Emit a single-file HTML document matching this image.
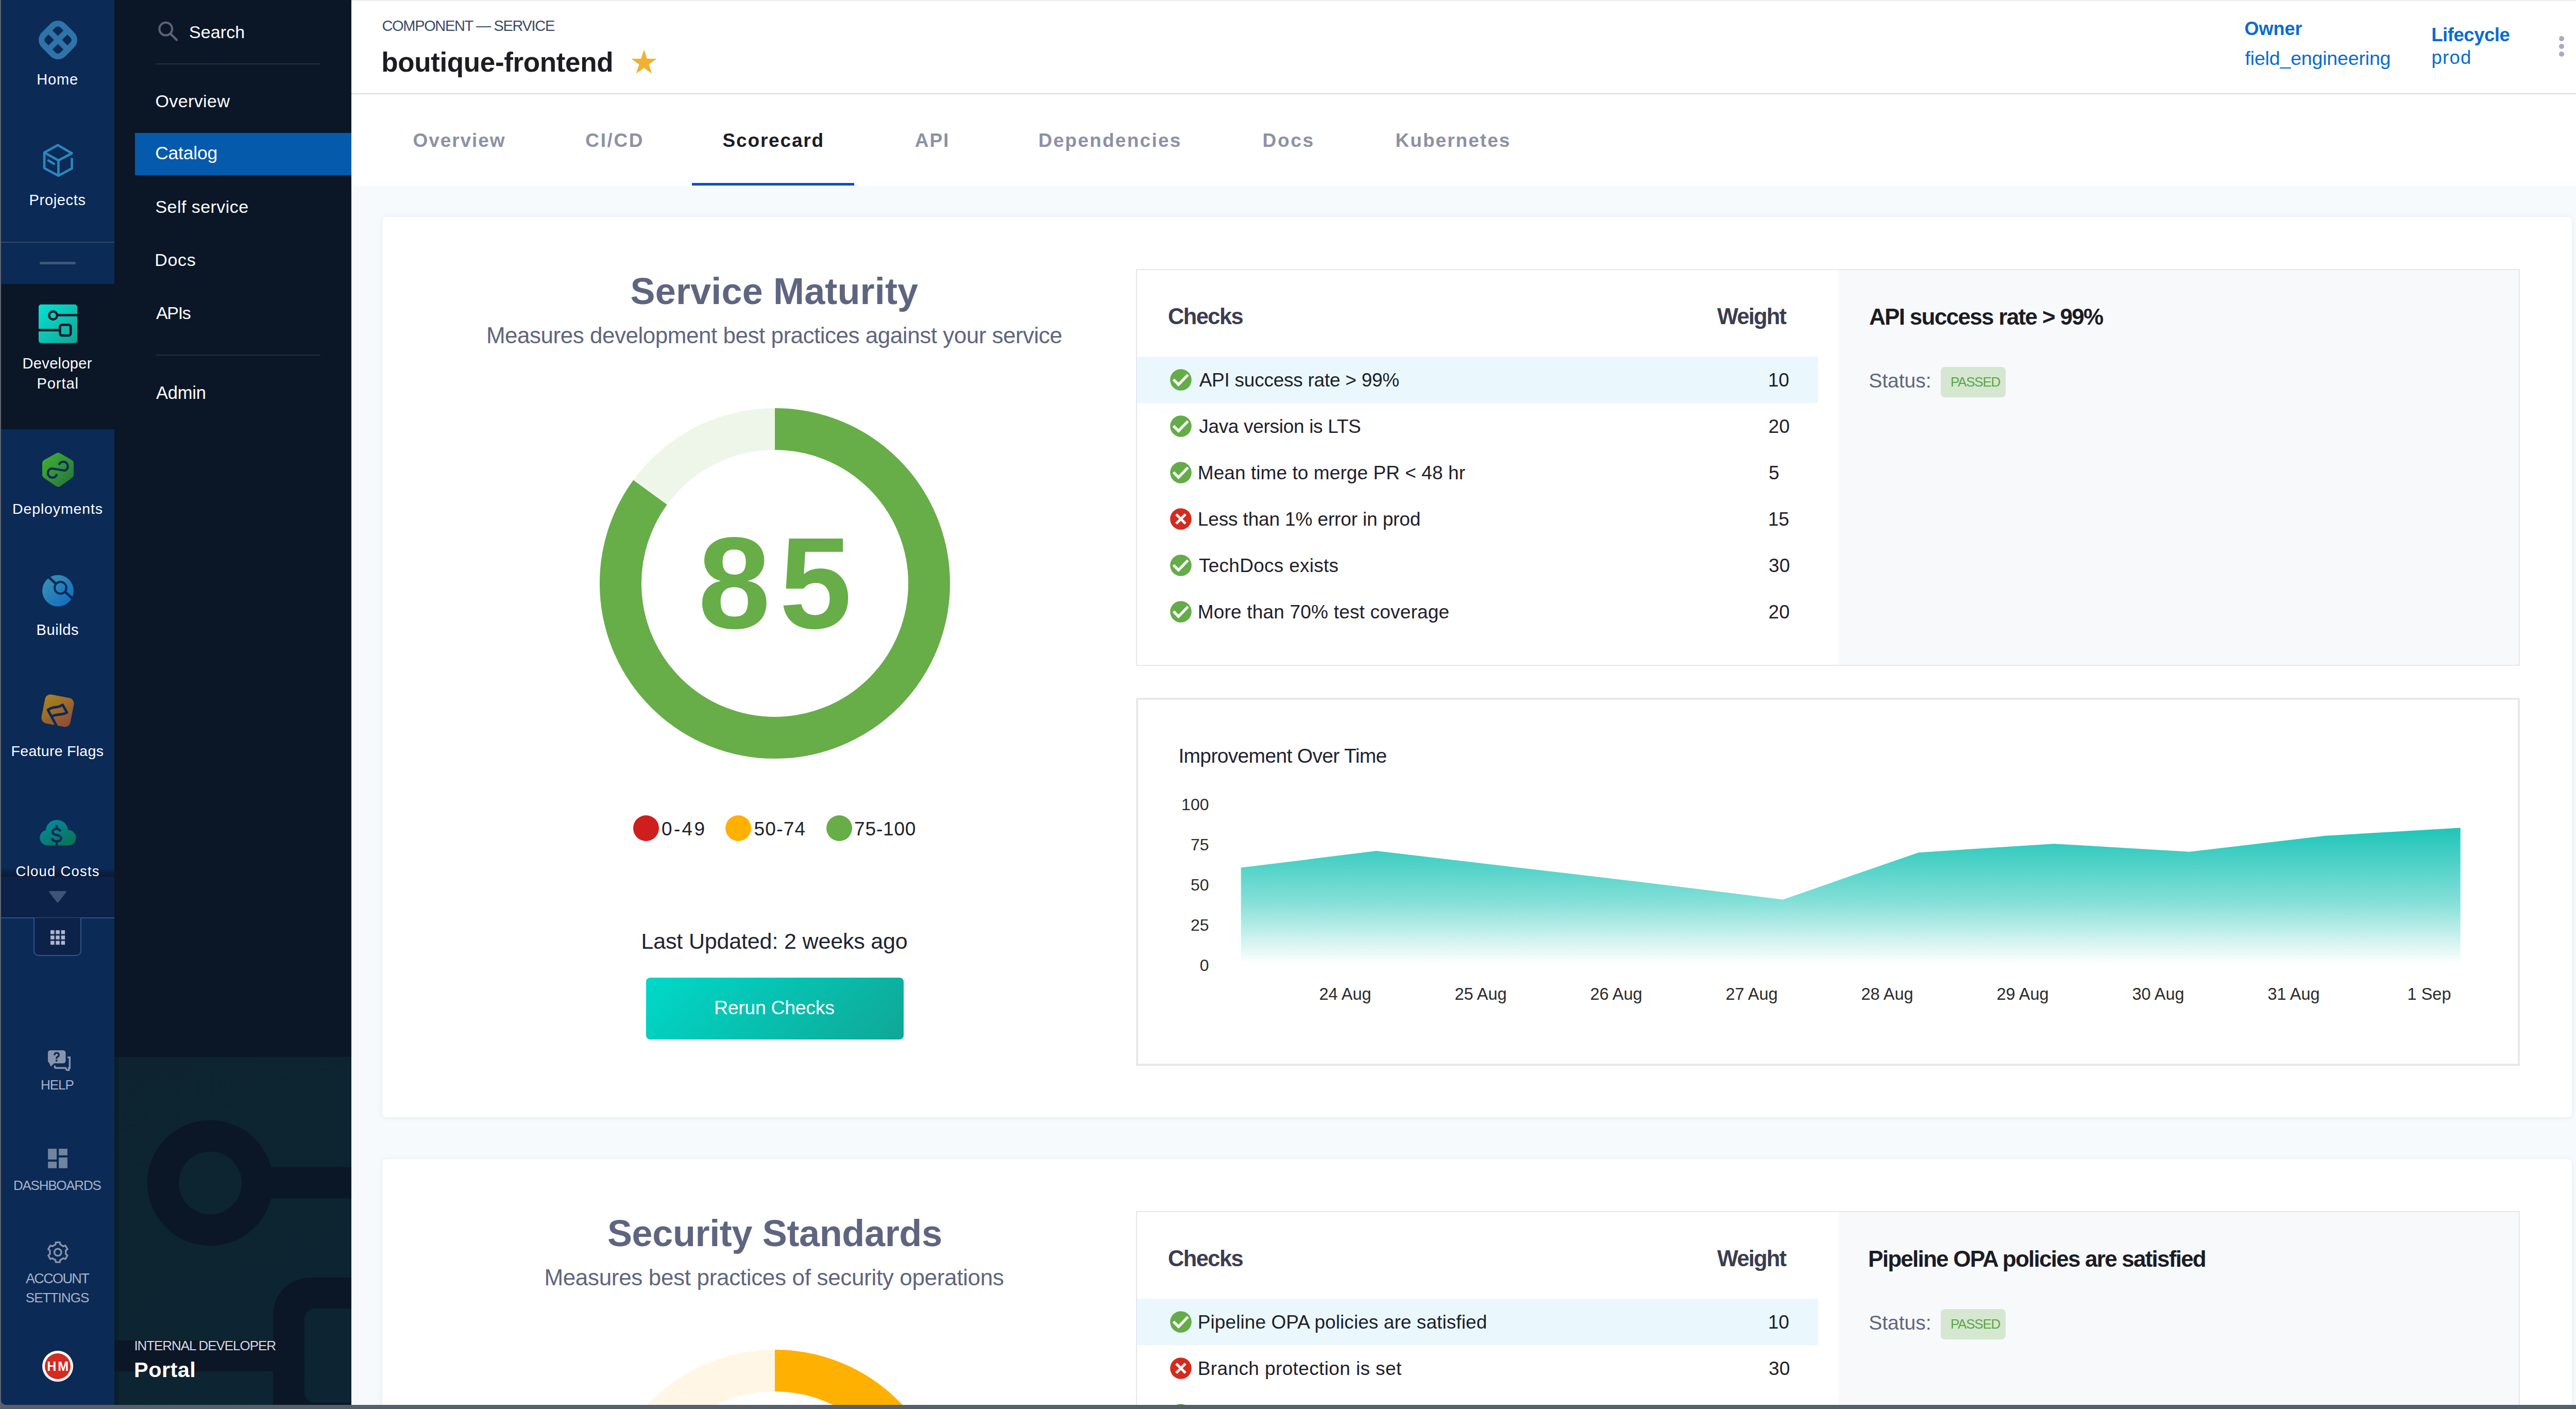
<!DOCTYPE html><html><head><meta charset="utf-8"><style>
html,body{margin:0;padding:0;width:5078px;height:2734px;overflow:hidden;background:#565f6b}
body{position:relative;font-family:"Liberation Sans",sans-serif}
.r,.t,.s{position:absolute}
.t{white-space:nowrap}
</style></head><body>
<div class="r" style="left:0.0px;top:0.0px;width:5078.0px;height:2734.0px;background:#565f6b;"></div>
<div class="r" style="left:682.0px;top:0.0px;width:4370.0px;height:2726.0px;background:#f6fafd;"></div>
<div class="r" style="left:682.0px;top:0.0px;width:4370.0px;height:182.0px;background:#ffffff;"></div>
<div class="r" style="left:682.0px;top:0.0px;width:4370.0px;height:2.0px;background:#eeeeef;"></div>
<div class="r" style="left:682.0px;top:181.0px;width:4370.0px;height:2.0px;background:#d8d9e3;"></div>
<div class="r" style="left:682.0px;top:183.0px;width:4370.0px;height:177.0px;background:#ffffff;"></div>
<div class="r" style="left:1343.0px;top:355.0px;width:315.0px;height:5.0px;background:#0a4fcb;"></div>
<div class="r" style="left:5052.0px;top:0.0px;width:26.0px;height:2726.0px;background:#f8f8f8;border-bottom-right-radius:10px;"></div>
<div class="r" style="left:5052.0px;top:0.0px;width:2.0px;height:2726.0px;background:#e4e4e4;"></div>
<div class="r" style="left:5060.0px;top:6.0px;width:16.0px;height:1255.0px;background:#c1c1c1;border-radius:8px;"></div>
<div class="r" style="left:742.0px;top:421.0px;width:4250.0px;height:1747.0px;background:#ffffff;border-radius:8px;box-shadow:0 1px 8px rgba(60,80,120,0.11);"></div>
<div class="r" style="left:742.0px;top:2249.0px;width:4250.0px;height:477.0px;background:#ffffff;border-radius:8px 8px 0 0;box-shadow:0 1px 8px rgba(60,80,120,0.11);"></div>
<div class="r" style="left:2.0px;top:0.0px;width:680.0px;height:2726.0px;background:#0b1726;border-bottom-left-radius:10px;"></div>
<div class="r" style="left:2.0px;top:0.0px;width:220.0px;height:2726.0px;background:#0b2a56;border-bottom-left-radius:10px;"></div>
<div class="r" style="left:2.0px;top:469.0px;width:220.0px;height:2.0px;background:#34496b;"></div>
<div class="r" style="left:77.0px;top:508.0px;width:70.0px;height:5.0px;background:#3f5878;border-radius:2px;"></div>
<div class="r" style="left:2.0px;top:551.0px;width:220.0px;height:282.0px;background:#0b1726;"></div>
<div class="r" style="left:2.0px;top:1701.0px;width:220.0px;height:80.0px;background:#0c2249;"></div>
<div class="r" style="left:2.0px;top:1780.0px;width:220.0px;height:2.0px;background:#34507a;"></div>
<div class="r" style="left:65.0px;top:1781.0px;width:93.0px;height:74.0px;background:#0c2249;box-sizing:border-box;border:2px solid #2c5592;border-top:none;border-radius:0 0 10px 10px;"></div>
<svg class="s" style="left:98.0px;top:1805.0px" width="28.5" height="28.5" viewBox="0 0 28.5 28.5"><rect x="0.0" y="0.0" width="7.5" height="7.5" fill="#b2b4cc"/><rect x="0.0" y="10.3" width="7.5" height="7.5" fill="#b2b4cc"/><rect x="0.0" y="20.6" width="7.5" height="7.5" fill="#b2b4cc"/><rect x="10.3" y="0.0" width="7.5" height="7.5" fill="#b2b4cc"/><rect x="10.3" y="10.3" width="7.5" height="7.5" fill="#b2b4cc"/><rect x="10.3" y="20.6" width="7.5" height="7.5" fill="#b2b4cc"/><rect x="20.6" y="0.0" width="7.5" height="7.5" fill="#b2b4cc"/><rect x="20.6" y="10.3" width="7.5" height="7.5" fill="#b2b4cc"/><rect x="20.6" y="20.6" width="7.5" height="7.5" fill="#b2b4cc"/></svg>
<svg class="s" style="left:93.0px;top:1727.0px" width="38" height="26" viewBox="0 0 38 26"><path d="M4,2 L34,2 Q37,2 35,5 L21,23 Q19,25.5 17,23 L3,5 Q1,2 4,2 Z" fill="#3d5577"/></svg>
<div class="t" style="left:71.2px;top:139.5px;font-size:29.0px;line-height:29.0px;letter-spacing:0.88px;color:#ffffff;font-weight:400;">Home</div>
<div class="t" style="left:56.6px;top:373.5px;font-size:29.0px;line-height:29.0px;letter-spacing:0.66px;color:#ffffff;font-weight:400;">Projects</div>
<div class="t" style="left:43.6px;top:690.5px;font-size:29.0px;line-height:29.0px;letter-spacing:0.33px;color:#ffffff;font-weight:400;">Developer</div>
<div class="t" style="left:71.6px;top:729.5px;font-size:29.0px;line-height:29.0px;letter-spacing:0.90px;color:#ffffff;font-weight:400;">Portal</div>
<div class="t" style="left:24.1px;top:973.4px;font-size:28.5px;line-height:28.5px;letter-spacing:0.85px;color:#ffffff;font-weight:400;">Deployments</div>
<div class="t" style="left:70.6px;top:1207.5px;font-size:29.0px;line-height:29.0px;letter-spacing:0.57px;color:#ffffff;font-weight:400;">Builds</div>
<div class="t" style="left:21.6px;top:1442.9px;font-size:28.5px;line-height:28.5px;letter-spacing:0.29px;color:#ffffff;font-weight:400;">Feature Flags</div>
<div class="r" style="left:2.0px;top:1684.0px;width:220.0px;height:17.0px;background:linear-gradient(rgba(8,22,50,0),rgba(8,22,50,0.85));"></div>
<div class="t" style="left:30.6px;top:1676.7px;font-size:27.5px;line-height:27.5px;letter-spacing:1.22px;color:#ffffff;font-weight:400;">Cloud Costs</div>
<div class="t" style="left:78.9px;top:2092.0px;font-size:26.0px;line-height:26.0px;letter-spacing:-1.00px;color:#a9b4c9;font-weight:400;">HELP</div>
<div class="t" style="left:25.9px;top:2287.0px;font-size:26.0px;line-height:26.0px;letter-spacing:-1.24px;color:#a9b4c9;font-weight:400;">DASHBOARDS</div>
<div class="t" style="left:49.9px;top:2467.7px;font-size:27.0px;line-height:27.0px;letter-spacing:-1.62px;color:#a9b4c9;font-weight:400;">ACCOUNT</div>
<div class="t" style="left:49.8px;top:2505.0px;font-size:26.0px;line-height:26.0px;letter-spacing:-0.93px;color:#a9b4c9;font-weight:400;">SETTINGS</div>
<svg class="s" style="left:74.8px;top:39.8px" width="75" height="75" viewBox="0 0 75 75"><g transform="rotate(45 37.5 37.5)"><rect x="5" y="5" width="65" height="65" rx="20.5" fill="#2f74a9"/><g fill="#0b2a56"><path d="M17,23.5 A6.5,6.5 0 0 1 23.5,17 L32,17 L32,32 L17,32 Z"/><path d="M43,17 L51.5,17 A6.5,6.5 0 0 1 58,23.5 L58,32 L43,32 Z"/><path d="M17,43 L32,43 L32,58 L23.5,58 A6.5,6.5 0 0 1 17,51.5 Z"/><path d="M43,43 L58,43 L58,51.5 A6.5,6.5 0 0 1 51.5,58 L43,58 Z"/></g></g></svg>
<svg class="s" style="left:75.0px;top:270.0px" width="75" height="80" viewBox="0 0 75 80"><path d="M64.6,38.4 L64.6,56.8 L38.4,71 L11,56.3 L11,26 L37.2,11.5 L64.6,27.4 L38.4,41.3 L11,26 M38.4,41.3 L38.4,71 M18.75,41.3 L29.7,47.9" fill="none" stroke="#2a88bf" stroke-width="4.6" stroke-linejoin="round" stroke-linecap="round"/></svg>
<svg class="s" style="left:70.0px;top:585.0px" width="85" height="85" viewBox="0 0 85 85"><defs><linearGradient id="gdp" x1="0" y1="0" x2="1" y2="1"><stop offset="0" stop-color="#03e4d2"/><stop offset="1" stop-color="#15a395"/></linearGradient></defs><rect x="5" y="5.8" width="75" height="75" rx="5" fill="url(#gdp)"/><circle cx="33.1" cy="27" r="7.8" fill="none" stroke="#0b1726" stroke-width="4.4"/><path d="M40.5,26.5 L80,26.5 M5,55.6 L44,55.6" stroke="#0b1726" stroke-width="4.6"/><rect x="46.4" y="45.2" width="20.8" height="20.8" rx="4" fill="none" stroke="#0b1726" stroke-width="4.6"/></svg>
<svg class="s" style="left:75.0px;top:870.0px" width="75" height="80" viewBox="0 0 75 80"><defs><linearGradient id="gdep" x1="0" y1="0" x2="1" y2="1"><stop offset="0" stop-color="#3eab35"/><stop offset="1" stop-color="#287a39"/></linearGradient></defs><polygon points="37.8,16 60.5,29 60.5,51 37.8,67 14.5,51 14.5,29" fill="url(#gdep)" stroke="url(#gdep)" stroke-width="15" stroke-linejoin="round"/><path d="M39.5,32 A8.8,8.8 0 1 1 50.5,43.2 L25,39 A9,9 0 1 0 35.5,50" fill="none" stroke="#0b2a56" stroke-width="4.2"/></svg>
<svg class="s" style="left:75.0px;top:1105.0px" width="75" height="80" viewBox="0 0 75 80"><defs><linearGradient id="gbld" x1="0" y1="0" x2="1" y2="1"><stop offset="0" stop-color="#3d96ad"/><stop offset="1" stop-color="#0b68c6"/></linearGradient></defs><circle cx="37.5" cy="41.3" r="30.5" fill="url(#gbld)"/><circle cx="42.4" cy="35.5" r="11.4" fill="none" stroke="#0b2a56" stroke-width="4"/><path d="M18.6,14.1 L32.7,26.8 M52.1,44.2 L68,58.5" stroke="#0b2a56" stroke-width="5"/></svg>
<svg class="s" style="left:72.0px;top:1340.0px" width="80" height="80" viewBox="0 0 80 80"><defs><linearGradient id="gff" x1="0" y1="0" x2="1" y2="1"><stop offset="0" stop-color="#aa881c"/><stop offset="1" stop-color="#8c483b"/></linearGradient></defs><rect x="11.5" y="10.5" width="57" height="57" rx="11" fill="url(#gff)" transform="rotate(11 40 39)"/><path d="M38.5,70 L21,37.5 C27,32 35,32.5 41,31.5 C45,30.5 47,29 49.5,27.5 L58,42.5 C54,45 49,46 43.5,46.5 C38,47 34,47.5 30,49.5" fill="none" stroke="#0b2a56" stroke-width="4.8" stroke-linejoin="round"/></svg>
<svg class="s" style="left:72.0px;top:1580.0px" width="80" height="70" viewBox="0 0 80 70"><defs><linearGradient id="gcc" gradientUnits="userSpaceOnUse" x1="30" y1="10" x2="55" y2="62"><stop offset="0" stop-color="#05899c"/><stop offset="1" stop-color="#0a7357"/></linearGradient></defs><g fill="url(#gcc)"><circle cx="38.4" cy="32.6" r="21.7"/><circle cx="20.3" cy="45.6" r="15"/><circle cx="60.5" cy="45.6" r="15"/><rect x="20.3" y="40" width="40.2" height="20.6"/></g><path d="M45.5,33 C44,29.5 41,28.3 37.8,28.3 C33,28.3 30,31 30,34.5 C30,38.5 34,39.5 38,40.3 C42.5,41.2 46.5,42.5 46.5,46.5 C46.5,50.5 42.5,52.5 38,52.5 C33.5,52.5 30,50.5 28.5,46.5 M37.9,21 L37.9,28.3 M38.2,52.5 L38.2,61" fill="none" stroke="#0b2a56" stroke-width="4.5"/></svg>
<svg class="s" style="left:85.0px;top:2030.0px" width="60" height="55" viewBox="0 0 60 55"><path d="M13,8.1 H37 Q42.5,8.1 42.5,13.6 V27.8 Q42.5,33.3 37,33.3 H20.2 L13.5,39.5 L10.7,33 Q7.9,31 7.9,27.8 V13.6 Q7.9,8.1 13,8.1 Z" fill="#8894ae"/><path d="M20.8,17.5 Q20.8,13.2 25,13.2 Q29.3,13.2 29.3,17 Q29.3,19.5 26.6,20.8 Q24.6,21.8 24.6,24.5" fill="none" stroke="#0b2a56" stroke-width="3.3"/><circle cx="24.7" cy="28" r="2" fill="#0b2a56"/><path d="M46.2,21.6 H50.3 V42.2 H48.6 V46.2 H44.8 L42,42.2 H23.5 Q21.3,42.2 21.3,40 V37.5" fill="none" stroke="#8894ae" stroke-width="3.4"/></svg>
<svg class="s" style="left:85.0px;top:2220.0px" width="55" height="55" viewBox="0 0 55 55"><g fill="#72849e"><rect x="8.1" y="9" width="16.9" height="20.9"/><rect x="8.1" y="34.1" width="16.9" height="12.7"/><rect x="29.1" y="9" width="16.8" height="12.8"/><rect x="29.1" y="26" width="16.8" height="20.8"/></g></svg>
<svg class="s" style="left:85.0px;top:2400.0px" width="55" height="60" viewBox="0 0 55 60"><polygon points="22.68,14.79 23.22,10.73 31.38,10.73 31.92,14.79 38.08,18.34 41.87,16.79 45.94,23.84 42.70,26.35 42.70,33.45 45.94,35.96 41.87,43.01 38.08,41.46 31.92,45.01 31.38,49.07 23.22,49.07 22.68,45.01 16.52,41.46 12.73,43.01 8.66,35.96 11.90,33.45 11.90,26.35 8.66,23.84 12.73,16.79 16.52,18.34" fill="none" stroke="#8a95aa" stroke-width="3.3" stroke-linejoin="round"/><circle cx="27.3" cy="29.9" r="6.8" fill="none" stroke="#8a95aa" stroke-width="3.3"/></svg>
<svg class="s" style="left:80.0px;top:2619.0px" width="64" height="64" viewBox="0 0 64 64"><circle cx="32" cy="32" r="30" fill="#fff"/><circle cx="32" cy="32" r="25" fill="#d42a20"/></svg>
<div class="t" style="left:91.2px;top:2638.8px;font-size:25.0px;line-height:25.0px;letter-spacing:3.10px;color:#ffffff;font-weight:700;">HM</div>
<div class="r" style="left:262.0px;top:258.0px;width:420.0px;height:82.0px;background:#065aab;"></div>
<div class="r" style="left:302.0px;top:122.5px;width:320.0px;height:2.0px;background:#252e3b;"></div>
<div class="r" style="left:302.0px;top:687.5px;width:320.0px;height:2.0px;background:#252e3b;"></div>
<svg class="s" style="left:300.0px;top:38.0px" width="50" height="46" viewBox="0 0 50 46"><circle cx="21.8" cy="18.2" r="12.4" fill="none" stroke="#5e6178" stroke-width="4"/><path d="M31,27.5 L43,39.5" stroke="#5e6178" stroke-width="4.5" stroke-linecap="round"/></svg>
<div class="t" style="left:367.0px;top:44.5px;font-size:34.0px;line-height:34.0px;letter-spacing:0.08px;color:#ffffff;font-weight:400;">Search</div>
<div class="t" style="left:301.4px;top:179.2px;font-size:34.0px;line-height:34.0px;letter-spacing:0.41px;color:#ffffff;font-weight:400;">Overview</div>
<div class="t" style="left:301.2px;top:280.3px;font-size:35.5px;line-height:35.5px;letter-spacing:-0.23px;color:#ffffff;font-weight:400;">Catalog</div>
<div class="t" style="left:301.4px;top:383.7px;font-size:34.0px;line-height:34.0px;letter-spacing:0.46px;color:#ffffff;font-weight:400;">Self service</div>
<div class="t" style="left:300.2px;top:486.6px;font-size:34.0px;line-height:34.0px;letter-spacing:0.70px;color:#ffffff;font-weight:400;">Docs</div>
<div class="t" style="left:302.9px;top:589.6px;font-size:34.0px;line-height:34.0px;letter-spacing:-1.29px;color:#ffffff;font-weight:400;">APIs</div>
<div class="t" style="left:302.9px;top:744.5px;font-size:34.5px;line-height:34.5px;letter-spacing:-0.20px;color:#ffffff;font-weight:400;">Admin</div>
<div class="r" style="left:222px;top:2051px;width:460px;height:675px;background:linear-gradient(160deg,#0d2330,#0d2532);overflow:hidden"><svg width="460" height="675" viewBox="222 2051 460 675" style="position:absolute;left:0;top:0"><circle cx="408" cy="2295.4" r="91.5" fill="none" stroke="#0b1726" stroke-width="61"/><rect x="490" y="2264.5" width="200" height="61" fill="#0b1726"/><rect x="222" y="2601" width="340" height="60" fill="#0b1726"/><path fill-rule="evenodd" d="M530,2760 V2551 A72,72 0 0 1 602,2479 H700 V2760 Z M611,2539 H700 V2722 H611 A20,20 0 0 1 591,2702 V2559 A20,20 0 0 1 611,2539 Z" fill="#0b1726"/><rect x="222" y="2051" width="8" height="675" fill="#0b1a26" opacity="0.6"/></svg></div>
<div class="t" style="left:260.4px;top:2597.5px;font-size:26.0px;line-height:26.0px;letter-spacing:-1.07px;color:#d6d7e4;font-weight:400;">INTERNAL DEVELOPER</div>
<div class="t" style="left:260.1px;top:2636.6px;font-size:41.5px;line-height:41.5px;letter-spacing:0.44px;color:#ffffff;font-weight:700;">Portal</div>
<div class="t" style="left:741.5px;top:35.5px;font-size:29.0px;line-height:29.0px;letter-spacing:-1.34px;color:#3c4a67;font-weight:400;">COMPONENT — SERVICE</div>
<div class="t" style="left:740.2px;top:94.1px;font-size:53.0px;line-height:53.0px;letter-spacing:-0.37px;color:#1c1c24;font-weight:700;">boutique-frontend</div>
<div class="t" style="left:4356.5px;top:37.5px;font-size:36.0px;line-height:36.0px;letter-spacing:0.00px;color:#0a6bd0;font-weight:700;">Owner</div>
<div class="t" style="left:4357.5px;top:95.3px;font-size:37.5px;line-height:37.5px;letter-spacing:-0.17px;color:#0a6bd0;font-weight:400;">field_engineering</div>
<div class="t" style="left:4719.3px;top:49.5px;font-size:36.5px;line-height:36.5px;letter-spacing:-0.47px;color:#0a6bd0;font-weight:700;">Lifecycle</div>
<div class="t" style="left:4719.6px;top:94.1px;font-size:36.5px;line-height:36.5px;letter-spacing:1.21px;color:#0a6bd0;font-weight:400;">prod</div>
<div class="t" style="left:801.5px;top:254.3px;font-size:37.0px;line-height:37.0px;letter-spacing:1.93px;color:#8e90a6;font-weight:700;">Overview</div>
<div class="t" style="left:1136.3px;top:254.3px;font-size:37.0px;line-height:37.0px;letter-spacing:2.64px;color:#8e90a6;font-weight:700;">CI/CD</div>
<div class="t" style="left:1402.5px;top:254.3px;font-size:37.0px;line-height:37.0px;letter-spacing:1.84px;color:#1c1c24;font-weight:700;">Scorecard</div>
<div class="t" style="left:1775.7px;top:254.3px;font-size:37.0px;line-height:37.0px;letter-spacing:2.01px;color:#8e90a6;font-weight:700;">API</div>
<div class="t" style="left:2015.5px;top:254.3px;font-size:37.0px;line-height:37.0px;letter-spacing:2.28px;color:#8e90a6;font-weight:700;">Dependencies</div>
<div class="t" style="left:2450.5px;top:254.3px;font-size:37.0px;line-height:37.0px;letter-spacing:2.70px;color:#8e90a6;font-weight:700;">Docs</div>
<div class="t" style="left:2708.5px;top:254.3px;font-size:37.0px;line-height:37.0px;letter-spacing:2.04px;color:#8e90a6;font-weight:700;">Kubernetes</div>
<svg class="s" style="left:1223.8px;top:96.4px" width="52" height="52" viewBox="0 0 52 52"><polygon points="26.00,0.00 20.16,17.96 1.27,17.97 16.55,29.07 10.72,47.03 26.00,35.93 41.28,47.03 35.45,29.07 50.73,17.97 31.84,17.96" fill="#f0b131"/></svg>
<div class="r" style="left:4967px;top:70px;width:10px;height:10px;border-radius:50%;background:#a9a9bf"></div>
<div class="r" style="left:4967px;top:85px;width:10px;height:10px;border-radius:50%;background:#a9a9bf"></div>
<div class="r" style="left:4967px;top:100px;width:10px;height:10px;border-radius:50%;background:#a9a9bf"></div>
<div class="t" style="left:1223.5px;top:528.7px;font-size:72.0px;line-height:72.0px;letter-spacing:0.16px;color:#5f6580;font-weight:700;">Service Maturity</div>
<div class="t" style="left:943.9px;top:628.8px;font-size:44.0px;line-height:44.0px;letter-spacing:-0.48px;color:#5f6580;font-weight:400;">Measures development best practices against your service</div>
<div class="r" style="left:2205.0px;top:522.0px;width:2686.0px;height:770.0px;background:#ffffff;box-sizing:border-box;border:2px solid #e6e7ec;"></div>
<div class="r" style="left:3569.0px;top:524.0px;width:1320.0px;height:766.0px;background:#f8f9fb;"></div>
<div class="t" style="left:2266.9px;top:593.2px;font-size:43.5px;line-height:43.5px;letter-spacing:-1.59px;color:#3b3d4f;font-weight:700;">Checks</div>
<div class="t" style="left:3333.0px;top:593.2px;font-size:43.5px;line-height:43.5px;letter-spacing:-1.83px;color:#3b3d4f;font-weight:700;">Weight</div>
<div class="r" style="left:2207.0px;top:692.0px;width:1322.0px;height:90.0px;background:#eaf8fd;"></div>
<div class="t" style="left:2327.7px;top:718.5px;font-size:37.0px;line-height:37.0px;letter-spacing:-0.25px;color:#1f2029;font-weight:400;">API success rate &gt; 99%</div>
<div class="t" style="left:3431.8px;top:718.5px;font-size:37.0px;line-height:37.0px;letter-spacing:0.00px;color:#1f2029;font-weight:400;">10</div>
<svg class="s" style="left:2271.0px;top:716.0px" width="42" height="42" viewBox="-21 -21 42 42"><circle r="20.8" fill="#64ac48"/><path d="M-14.4,-0.6 L-4.6,9.2 L13.8,-9.8" fill="none" stroke="#fff" stroke-width="5.2"/></svg>
<div class="t" style="left:2327.2px;top:808.5px;font-size:37.0px;line-height:37.0px;letter-spacing:-0.31px;color:#1f2029;font-weight:400;">Java version is LTS</div>
<div class="t" style="left:3432.6px;top:808.5px;font-size:37.0px;line-height:37.0px;letter-spacing:0.00px;color:#1f2029;font-weight:400;">20</div>
<svg class="s" style="left:2271.0px;top:806.0px" width="42" height="42" viewBox="-21 -21 42 42"><circle r="20.8" fill="#64ac48"/><path d="M-14.4,-0.6 L-4.6,9.2 L13.8,-9.8" fill="none" stroke="#fff" stroke-width="5.2"/></svg>
<div class="t" style="left:2324.8px;top:898.5px;font-size:37.0px;line-height:37.0px;letter-spacing:0.07px;color:#1f2029;font-weight:400;">Mean time to merge PR &lt; 48 hr</div>
<div class="t" style="left:3433.0px;top:898.5px;font-size:37.0px;line-height:37.0px;letter-spacing:0.00px;color:#1f2029;font-weight:400;">5</div>
<svg class="s" style="left:2271.0px;top:896.0px" width="42" height="42" viewBox="-21 -21 42 42"><circle r="20.8" fill="#64ac48"/><path d="M-14.4,-0.6 L-4.6,9.2 L13.8,-9.8" fill="none" stroke="#fff" stroke-width="5.2"/></svg>
<div class="t" style="left:2324.8px;top:988.5px;font-size:37.0px;line-height:37.0px;letter-spacing:-0.14px;color:#1f2029;font-weight:400;">Less than 1% error in prod</div>
<div class="t" style="left:3431.8px;top:988.5px;font-size:37.0px;line-height:37.0px;letter-spacing:0.00px;color:#1f2029;font-weight:400;">15</div>
<svg class="s" style="left:2271.0px;top:986.0px" width="42" height="42" viewBox="-21 -21 42 42"><circle r="20.8" fill="#d52a1e"/><path d="M-9,-9 L9,9 M9,-9 L-9,9" fill="none" stroke="#fff" stroke-width="5"/></svg>
<div class="t" style="left:2326.9px;top:1078.5px;font-size:37.0px;line-height:37.0px;letter-spacing:0.28px;color:#1f2029;font-weight:400;">TechDocs exists</div>
<div class="t" style="left:3433.1px;top:1078.5px;font-size:37.0px;line-height:37.0px;letter-spacing:0.00px;color:#1f2029;font-weight:400;">30</div>
<svg class="s" style="left:2271.0px;top:1076.0px" width="42" height="42" viewBox="-21 -21 42 42"><circle r="20.8" fill="#64ac48"/><path d="M-14.4,-0.6 L-4.6,9.2 L13.8,-9.8" fill="none" stroke="#fff" stroke-width="5.2"/></svg>
<div class="t" style="left:2324.8px;top:1168.5px;font-size:37.0px;line-height:37.0px;letter-spacing:0.19px;color:#1f2029;font-weight:400;">More than 70% test coverage</div>
<div class="t" style="left:3432.6px;top:1168.5px;font-size:37.0px;line-height:37.0px;letter-spacing:0.00px;color:#1f2029;font-weight:400;">20</div>
<svg class="s" style="left:2271.0px;top:1166.0px" width="42" height="42" viewBox="-21 -21 42 42"><circle r="20.8" fill="#64ac48"/><path d="M-14.4,-0.6 L-4.6,9.2 L13.8,-9.8" fill="none" stroke="#fff" stroke-width="5.2"/></svg>
<div class="t" style="left:3627.9px;top:592.8px;font-size:44.0px;line-height:44.0px;letter-spacing:-1.67px;color:#1c1c24;font-weight:700;">API success rate &gt; 99%</div>
<div class="t" style="left:3627.2px;top:719.0px;font-size:39.0px;line-height:39.0px;letter-spacing:-0.02px;color:#5f6580;font-weight:400;">Status:</div>
<div class="r" style="left:3767.0px;top:711.6px;width:126.0px;height:59.1px;background:#d5e7d0;border-radius:8px;"></div>
<div class="t" style="left:3785.9px;top:728.0px;font-size:26.0px;line-height:26.0px;letter-spacing:-1.23px;color:#59a545;font-weight:400;">PASSED</div>
<div class="t" style="left:1178.9px;top:2356.7px;font-size:72.0px;line-height:72.0px;letter-spacing:-0.36px;color:#5f6580;font-weight:700;">Security Standards</div>
<div class="t" style="left:1056.4px;top:2456.8px;font-size:44.0px;line-height:44.0px;letter-spacing:-0.33px;color:#5f6580;font-weight:400;">Measures best practices of security operations</div>
<div class="r" style="left:2205.0px;top:2350.0px;width:2686.0px;height:770.0px;background:#ffffff;box-sizing:border-box;border:2px solid #e6e7ec;"></div>
<div class="r" style="left:3569.0px;top:2352.0px;width:1320.0px;height:766.0px;background:#f8f9fb;"></div>
<div class="t" style="left:2266.9px;top:2421.2px;font-size:43.5px;line-height:43.5px;letter-spacing:-1.59px;color:#3b3d4f;font-weight:700;">Checks</div>
<div class="t" style="left:3333.0px;top:2421.2px;font-size:43.5px;line-height:43.5px;letter-spacing:-1.83px;color:#3b3d4f;font-weight:700;">Weight</div>
<div class="r" style="left:2207.0px;top:2520.0px;width:1322.0px;height:90.0px;background:#eaf8fd;"></div>
<div class="t" style="left:2324.8px;top:2546.5px;font-size:37.0px;line-height:37.0px;letter-spacing:0.08px;color:#1f2029;font-weight:400;">Pipeline OPA policies are satisfied</div>
<div class="t" style="left:3431.8px;top:2546.5px;font-size:37.0px;line-height:37.0px;letter-spacing:0.00px;color:#1f2029;font-weight:400;">10</div>
<svg class="s" style="left:2271.0px;top:2544.0px" width="42" height="42" viewBox="-21 -21 42 42"><circle r="20.8" fill="#64ac48"/><path d="M-14.4,-0.6 L-4.6,9.2 L13.8,-9.8" fill="none" stroke="#fff" stroke-width="5.2"/></svg>
<div class="t" style="left:2324.8px;top:2636.5px;font-size:37.0px;line-height:37.0px;letter-spacing:0.38px;color:#1f2029;font-weight:400;">Branch protection is set</div>
<div class="t" style="left:3433.1px;top:2636.5px;font-size:37.0px;line-height:37.0px;letter-spacing:0.00px;color:#1f2029;font-weight:400;">30</div>
<svg class="s" style="left:2271.0px;top:2634.0px" width="42" height="42" viewBox="-21 -21 42 42"><circle r="20.8" fill="#d52a1e"/><path d="M-9,-9 L9,9 M9,-9 L-9,9" fill="none" stroke="#fff" stroke-width="5"/></svg>
<div class="t" style="left:2326.1px;top:2726.5px;font-size:37.0px;line-height:37.0px;letter-spacing:0.45px;color:#1f2029;font-weight:400;">Secrets scanning enabled</div>
<div class="t" style="left:3432.6px;top:2726.5px;font-size:37.0px;line-height:37.0px;letter-spacing:0.00px;color:#1f2029;font-weight:400;">20</div>
<svg class="s" style="left:2271.0px;top:2724.0px" width="42" height="42" viewBox="-21 -21 42 42"><circle r="20.8" fill="#64ac48"/><path d="M-14.4,-0.6 L-4.6,9.2 L13.8,-9.8" fill="none" stroke="#fff" stroke-width="5.2"/></svg>
<div class="t" style="left:3626.1px;top:2420.8px;font-size:44.0px;line-height:44.0px;letter-spacing:-1.76px;color:#1c1c24;font-weight:700;">Pipeline OPA policies are satisfied</div>
<div class="t" style="left:3627.2px;top:2547.0px;font-size:39.0px;line-height:39.0px;letter-spacing:-0.02px;color:#5f6580;font-weight:400;">Status:</div>
<div class="r" style="left:3767.0px;top:2539.6px;width:126.0px;height:59.1px;background:#d5e7d0;border-radius:8px;"></div>
<div class="t" style="left:3785.9px;top:2556.0px;font-size:26.0px;line-height:26.0px;letter-spacing:-1.23px;color:#59a545;font-weight:400;">PASSED</div>
<svg class="s" style="left:1154.0px;top:782.0px" width="700" height="700" viewBox="0 0 700 700"><circle cx="350" cy="350" r="299.5" fill="none" stroke="#eef6ea" stroke-width="81"/><circle cx="350" cy="350" r="299.5" fill="none" stroke="#67ad48" stroke-width="81" stroke-dasharray="1599.54 1881.81" transform="rotate(-90 350 350)"/></svg>
<svg class="s" style="left:1154.0px;top:2609.0px" width="700" height="700" viewBox="0 0 700 700"><circle cx="350" cy="350" r="299.5" fill="none" stroke="#fff6e6" stroke-width="81"/><circle cx="350" cy="350" r="299.5" fill="none" stroke="#ffb000" stroke-width="81" stroke-dasharray="1166.72 1881.81" transform="rotate(-90 350 350)"/></svg>
<div class="t" style="left:1355.0px;top:1005.7px;font-size:252.5px;line-height:252.5px;letter-spacing:17.25px;color:#67ad48;font-weight:700;">85</div>
<div class="r" style="left:1229px;top:1582px;width:50px;height:50px;border-radius:50%;background:#cf1e1e"></div>
<div class="r" style="left:1408px;top:1582px;width:50px;height:50px;border-radius:50%;background:#ffb000"></div>
<div class="r" style="left:1604px;top:1582px;width:50px;height:50px;border-radius:50%;background:#67ad48"></div>
<div class="t" style="left:1284.1px;top:1590.3px;font-size:37.0px;line-height:37.0px;letter-spacing:3.30px;color:#1f2029;font-weight:400;">0-49</div>
<div class="t" style="left:1463.5px;top:1590.3px;font-size:37.0px;line-height:37.0px;letter-spacing:1.25px;color:#1f2029;font-weight:400;">50-74</div>
<div class="t" style="left:1658.1px;top:1590.3px;font-size:37.0px;line-height:37.0px;letter-spacing:0.82px;color:#1f2029;font-weight:400;">75-100</div>
<div class="t" style="left:1244.5px;top:1805.1px;font-size:43.0px;line-height:43.0px;letter-spacing:-0.16px;color:#1f2430;font-weight:400;">Last Updated: 2 weeks ago</div>
<div class="r" style="left:1254.0px;top:1897.0px;width:500.0px;height:119.5px;background:linear-gradient(135deg,#00d9c9,#0fa796);border-radius:8px;"></div>
<div class="t" style="left:1385.9px;top:1937.3px;font-size:37.5px;line-height:37.5px;letter-spacing:-0.32px;color:#ffffff;font-weight:400;">Rerun Checks</div>
<div class="r" style="left:2205.0px;top:1354.0px;width:2686.0px;height:714.0px;background:#ffffff;box-sizing:border-box;border:4px solid #e8e8e8;"></div>
<div class="t" style="left:2287.4px;top:1447.0px;font-size:39.0px;line-height:39.0px;letter-spacing:-0.67px;color:#1f2430;font-weight:400;">Improvement Over Time</div>
<svg class="s" style="left:2200.0px;top:1550.0px" width="2600" height="330" viewBox="0 0 2600 330"><defs><linearGradient id="ga" x1="0" y1="0" x2="0" y2="1"><stop offset="0" stop-color="#1ec5b8" stop-opacity="1"/><stop offset="0.55" stop-color="#1ec5b8" stop-opacity="0.55"/><stop offset="1" stop-color="#1ec5b8" stop-opacity="0.02"/></linearGradient></defs><polygon points="208.7,316.0 208.7,133.6 471.7,101.1 734.7,132.0 997.7,162.9 1260.7,195.4 1523.7,104.2 1786.7,87.2 2049.7,102.7 2312.7,71.8 2575.7,56.3 2575.7,316.0" fill="url(#ga)"/></svg>
<div class="t" style="left:2246.5px;width:100px;text-align:right;top:1545.4px;font-size:32px;line-height:32px;color:#2b2b2b">100</div>
<div class="t" style="left:2246.5px;width:100px;text-align:right;top:1623.3px;font-size:32px;line-height:32px;color:#2b2b2b">75</div>
<div class="t" style="left:2246.5px;width:100px;text-align:right;top:1701.2px;font-size:32px;line-height:32px;color:#2b2b2b">50</div>
<div class="t" style="left:2246.5px;width:100px;text-align:right;top:1779.1px;font-size:32px;line-height:32px;color:#2b2b2b">25</div>
<div class="t" style="left:2246.5px;width:100px;text-align:right;top:1857.0px;font-size:32px;line-height:32px;color:#2b2b2b">0</div>
<div class="t" style="left:2511.0px;width:200px;text-align:center;top:1913.1px;font-size:32.5px;line-height:32.5px;color:#2b2b2b">24 Aug</div>
<div class="t" style="left:2774.0px;width:200px;text-align:center;top:1913.1px;font-size:32.5px;line-height:32.5px;color:#2b2b2b">25 Aug</div>
<div class="t" style="left:3037.0px;width:200px;text-align:center;top:1913.1px;font-size:32.5px;line-height:32.5px;color:#2b2b2b">26 Aug</div>
<div class="t" style="left:3300.0px;width:200px;text-align:center;top:1913.1px;font-size:32.5px;line-height:32.5px;color:#2b2b2b">27 Aug</div>
<div class="t" style="left:3563.0px;width:200px;text-align:center;top:1913.1px;font-size:32.5px;line-height:32.5px;color:#2b2b2b">28 Aug</div>
<div class="t" style="left:3826.0px;width:200px;text-align:center;top:1913.1px;font-size:32.5px;line-height:32.5px;color:#2b2b2b">29 Aug</div>
<div class="t" style="left:4089.0px;width:200px;text-align:center;top:1913.1px;font-size:32.5px;line-height:32.5px;color:#2b2b2b">30 Aug</div>
<div class="t" style="left:4352.0px;width:200px;text-align:center;top:1913.1px;font-size:32.5px;line-height:32.5px;color:#2b2b2b">31 Aug</div>
<div class="t" style="left:4615.0px;width:200px;text-align:center;top:1913.1px;font-size:32.5px;line-height:32.5px;color:#2b2b2b">1 Sep</div>
<div class="r" style="left:0.0px;top:2726.0px;width:5078.0px;height:8.0px;background:#565f6b;"></div>
<div class="r" style="left:0.0px;top:0.0px;width:2.0px;height:2734.0px;background:#5d6470;"></div>
</body></html>
